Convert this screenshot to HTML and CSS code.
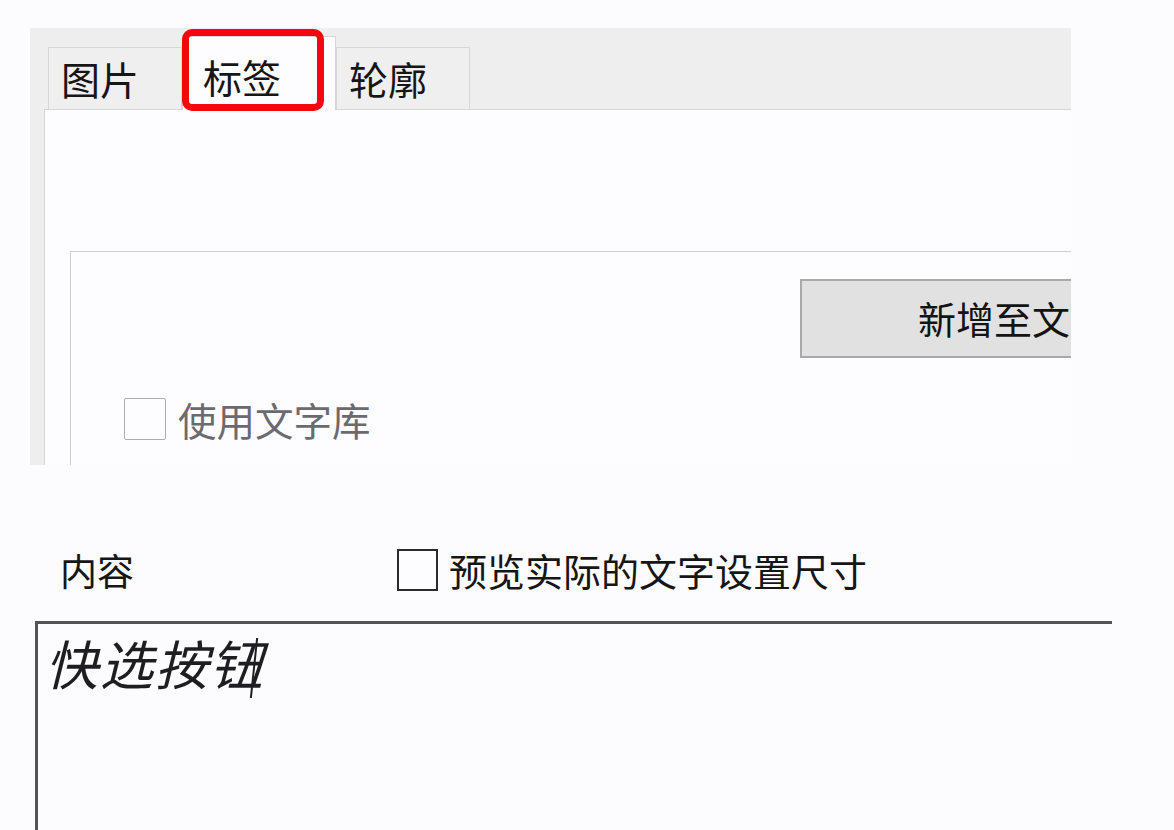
FILE: index.html
```html
<!DOCTYPE html>
<html lang="zh-CN">
<head>
<meta charset="utf-8">
<title>标签</title>
<link rel="stylesheet" href="styles.css">
</head>
<body>
<div class="shot-top">
  <div class="tabs">
    <div class="tab">图片</div>
    <div class="tab tab-active">标签</div>
    <div class="tab">轮廓</div>
  </div>
  <div class="panel">
    <div class="group">
      <div class="btn-row">
        <div class="btn">新增至文</div>
      </div>
      <label class="check-row">
        <span class="box box-light"></span>
        <span class="check-text">使用文字库</span>
      </label>
    </div>
  </div>
</div>

<div class="content-row">
  <span class="content-label">内容</span>
  <label class="preview">
    <span class="box box-dark"></span>
    <span class="preview-text">预览实际的文字设置尺寸</span>
  </label>
</div>
<div class="editor">
  <span class="editor-text">快选按钮</span><span class="caret"></span>
</div>
</body>
</html>
```
FILE: styles.css
```css
*, *::before, *::after { box-sizing: border-box; }

html, body {
  margin: 0;
  padding: 0;
  background: #fcfbfd;
  width: 1174px;
  height: 830px;
  overflow: hidden;
  font-family: "Noto Sans CJK SC", "Noto Sans", sans-serif;
  color: #161616;
}

.shot-top {
  margin: 28px 0 0 30px;
  width: 1041px;
  height: 437px;
  background: #efeeef;
  overflow: hidden;
}

.tabs {
  display: flex;
  align-items: flex-end;
  height: 81px;
  padding-left: 18px;
}

.tab {
  position: relative;
  width: 134px;
  height: 62px;
  border: 1px solid #d6d6d6;
  border-bottom: none;
  background: #f0eff0;
  font-size: 39px;
  line-height: 60px;
  padding-left: 12px;
}

.tab-active {
  width: 154px;
  height: 74px;
  line-height: 78px;
  padding-left: 20px;
  background: #fdfcfe;
  border-color: #d6d6d6;
  margin-bottom: -1px;
  z-index: 1;
}

.tab-active::after {
  content: "";
  position: absolute;
  left: -1px;
  top: -8px;
  width: 142px;
  height: 82px;
  border: 7px solid #f5080d;
  border-radius: 10px;
}

.panel {
  margin-left: 14px;
  height: 360px;
  background: #fdfcfe;
  border-top: 1px solid #d6d6d6;
  border-left: 1px solid #d6d6d6;
  padding: 141px 0 0 25px;
}

.group {
  height: 300px;
  border-top: 1px solid #cfcfcf;
  border-left: 1px solid #cfcfcf;
  padding-top: 27px;
}

.btn-row {
  display: flex;
  padding-left: 729px;
}

.btn {
  flex: none;
  width: 272px;
  height: 79px;
  background: #e1e1e1;
  border: 2px solid #a9a9a9;
  border-right: none;
  font-size: 38px;
  line-height: 73px;
  padding-left: 116px;
  color: #141414;
  white-space: nowrap;
}

.check-row {
  display: flex;
  align-items: center;
  margin-top: 40px;
  padding-left: 53px;
}

.box {
  flex: none;
  display: inline-block;
  width: 42px;
  height: 42px;
  background: #fdfcfe;
}

.box-light {
  border: 1.5px solid #adadad;
  border-radius: 2px;
}

.check-text {
  margin-left: 12px;
  font-size: 38.5px;
  color: #6b6a70;
  line-height: 42px;
}

.content-row {
  display: flex;
  align-items: center;
  height: 42px;
  margin-top: 84px;
  padding-left: 60px;
}

.content-label {
  width: 337px;
  font-size: 37px;
  line-height: 42px;
}

.preview {
  display: flex;
  align-items: center;
}

.box-dark {
  width: 41px;
  height: 42px;
  border: 2px solid #2b2b2b;
}

.preview-text {
  margin-left: 11px;
  font-size: 38px;
  line-height: 42px;
}

.editor {
  margin: 30px 0 0 35px;
  width: 1077px;
  height: 300px;
  border-top: 3px solid #545454;
  border-left: 3px solid #545454;
  padding: 2px 0 0 7px;
  display: flex;
  align-items: flex-start;
}

.editor-text {
  font-size: 53px;
  font-style: italic;
  line-height: 72px;
  color: #1d1d22;
  letter-spacing: 2px;
}

.caret {
  display: inline-block;
  width: 0;
  height: 60px;
  margin: 12px 0 0 -12px;
  border-left: 2px solid #1d1d22;
  transform: skewX(-6deg);
}
```
